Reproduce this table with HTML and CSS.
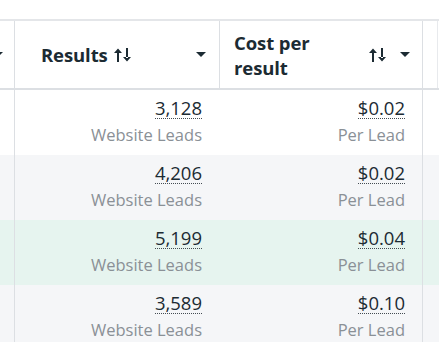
FILE: index.html
```html
<!DOCTYPE html>
<html>
<head>
<meta charset="utf-8">
<link rel="stylesheet" href="styles.css">
</head>
<body>
<div class="table">
  <div class="row head">
    <div class="cell c0"><span class="caret"></span></div>
    <div class="cell c1">
      <span class="label">Results</span>
      <span class="sort">
        <svg width="17" height="14" viewBox="0 0 17 14"><path d="M0 5L4 0.5L8 5Z M3 4h2v10h-2Z" fill="#1c2b33"/><path d="M9 9L13 13.5L17 9Z M12 0h2v10h-2Z" fill="#1c2b33"/></svg>
      </span>
      <span class="grow"></span>
      <span class="caret"></span>
    </div>
    <div class="cell c2">
      <span class="label">Cost per<br>result</span>
      <span class="grow"></span>
      <span class="sort">
        <svg width="17" height="14" viewBox="0 0 17 14"><path d="M0 5L4 0.5L8 5Z M3 4h2v10h-2Z" fill="#1c2b33"/><path d="M9 9L13 13.5L17 9Z M12 0h2v10h-2Z" fill="#1c2b33"/></svg>
      </span>
      <span class="caret"></span>
    </div>
    <div class="cell c3"></div>
  </div>

  <div class="row data white">
    <div class="cell c0"></div>
    <div class="cell c1"><span class="num">3,128</span><span class="sub">Website Leads</span></div>
    <div class="cell c2"><span class="num">$0.02</span><span class="sub">Per Lead</span></div>
    <div class="cell c3"></div>
  </div>
  <div class="row data gray">
    <div class="cell c0"></div>
    <div class="cell c1"><span class="num">4,206</span><span class="sub">Website Leads</span></div>
    <div class="cell c2"><span class="num">$0.02</span><span class="sub">Per Lead</span></div>
    <div class="cell c3"></div>
  </div>
  <div class="row data green">
    <div class="cell c0"></div>
    <div class="cell c1"><span class="num">5,199</span><span class="sub">Website Leads</span></div>
    <div class="cell c2"><span class="num">$0.04</span><span class="sub">Per Lead</span></div>
    <div class="cell c3"></div>
  </div>
  <div class="row data gray">
    <div class="cell c0"></div>
    <div class="cell c1"><span class="num">3,589</span><span class="sub">Website Leads</span></div>
    <div class="cell c2"><span class="num">$0.10</span><span class="sub">Per Lead</span></div>
    <div class="cell c3"></div>
  </div>
</div>
</body>
</html>
```

FILE: styles.css
```css
html, body {
  margin: 0;
  padding: 0;
  background: #ffffff;
}
body {
  font-family: "Open Sans", Lato, sans-serif;
  color: #1c2b33;
  overflow: hidden;
}
.table {
  padding-top: 19px;
  width: 439px;
}
.row {
  display: flex;
}
.cell {
  box-sizing: border-box;
  flex: none;
}
.c0 { width: 15px; border-right: 1px solid #dcdfe3; }
.c1 { width: 205px; }
.c2 { width: 203px; border-right: 1px solid #dcdfe3; }
.c3 { flex: 1; }

.head {
  border-top: 2px solid #e4e6e9;
  border-bottom: 2px solid #dcdfe3;
  height: 67px;
}
.head .cell {
  display: flex;
  align-items: center;
}
.head .c1 {
  border-right: 1px solid #dcdfe3;
  padding: 0 13px 0 26px;
}
.head .c2 {
  padding: 0 12px 0 14px;
}
.head .c3 {
  border-left: 1px solid #e8eaed;
  margin-left: 14px;
}
.head .c0 .caret {
  margin-left: -7px;
}
.label {
  font-weight: 700;
  font-size: 18.5px;
  line-height: 25px;
  letter-spacing: -0.1px;
}
.sort {
  display: inline-flex;
  margin-left: 6px;
  margin-top: 1px;
}
.c2 .sort {
  margin-right: 14px;
}
.grow { flex: 1; }
.caret {
  width: 0;
  height: 0;
  border-left: 5px solid transparent;
  border-right: 5px solid transparent;
  border-top: 5px solid #1c2b33;
}

.data {
  height: 65px;
}
.data .c1, .data .c2 {
  display: flex;
  flex-direction: column;
  align-items: flex-end;
  padding-top: 7px;
}
.data .c1 { padding-right: 18px; }
.data .c2 { padding-right: 17px; }
.gray { background: #f5f6f8; }
.green { background: #e6f4ef; }
.num {
  font-size: 18.5px;
  line-height: 21px;
  border-bottom: 1px dotted #444c52;
}
.sub {
  font-size: 16.5px;
  line-height: 20px;
  margin-top: 6px;
  color: #8a9096;
}
```
